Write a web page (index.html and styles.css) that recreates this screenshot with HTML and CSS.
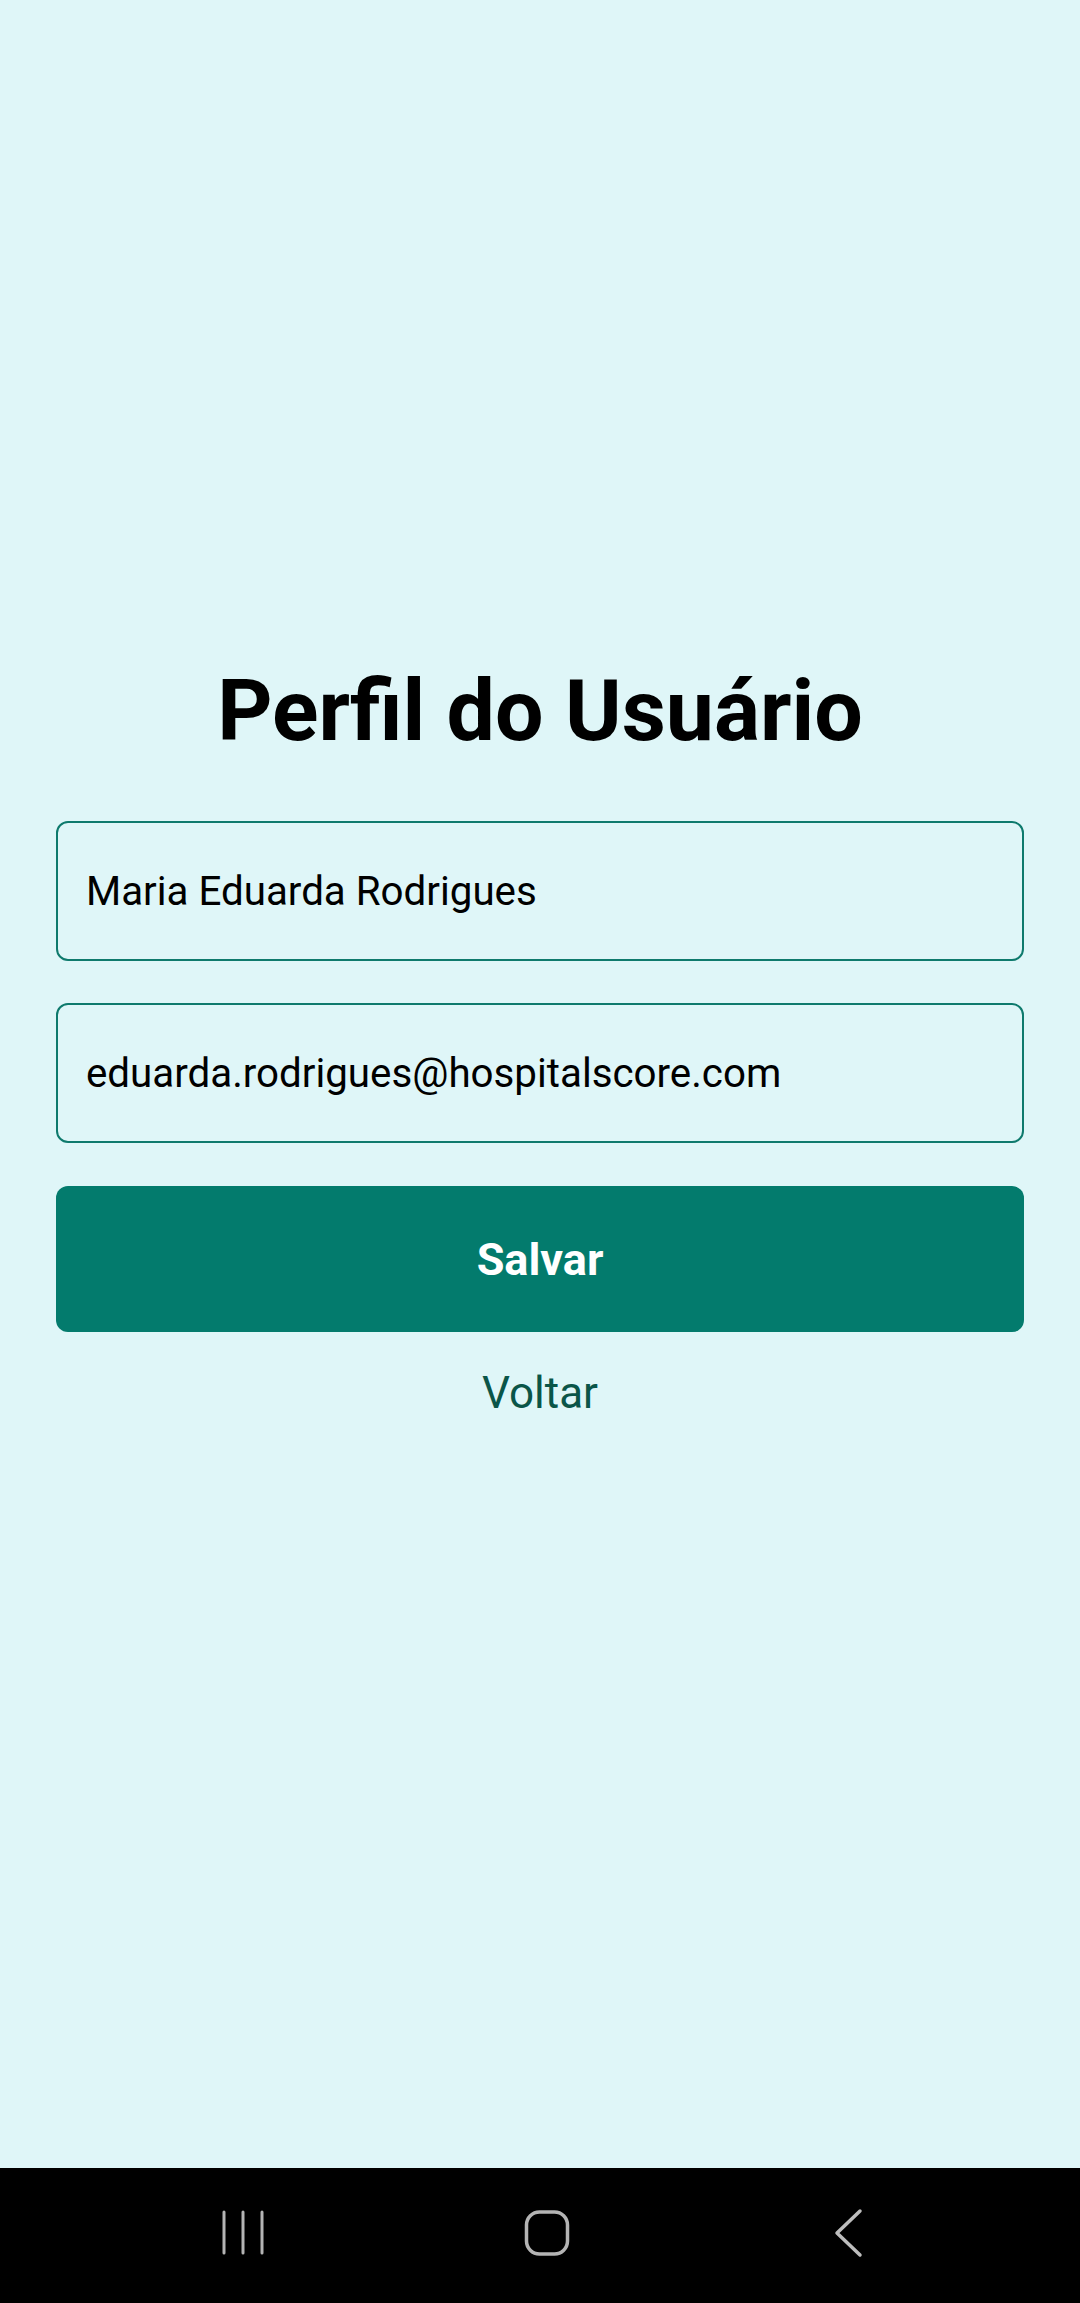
FILE: index.html
```html
<!DOCTYPE html>
<html lang="pt-BR">
<head>
<meta charset="utf-8">
<title>Perfil do Usuário</title>
<link rel="stylesheet" href="styles.css">
</head>
<body>
<div class="screen">
  <main class="content">
    <h1 class="title">Perfil do Usuário</h1>
    <div class="field">Maria Eduarda Rodrigues</div>
    <div class="field field-second">eduarda.rodrigues@hospitalscore.com</div>
    <button class="btn-save">Salvar</button>
    <a class="link-back">Voltar</a>
  </main>
  <nav class="navbar">
    <span class="nav-item">
      <svg width="60" height="60" viewBox="0 0 60 60"><path d="M11 9v41M30 9v41M49 9v41" stroke="#b4b4b4" stroke-width="3" stroke-linecap="round" fill="none"/></svg>
    </span>
    <span class="nav-item">
      <svg width="60" height="60" viewBox="0 0 60 60"><rect x="9.5" y="9" width="41" height="42" rx="13" stroke="#b4b4b4" stroke-width="3.5" fill="none"/></svg>
    </span>
    <span class="nav-item">
      <svg width="60" height="60" viewBox="0 0 60 60"><path d="M39 8L16 30L39 52" stroke="#bdbdbd" stroke-width="3.5" stroke-linecap="round" stroke-linejoin="round" fill="none"/></svg>
    </span>
  </nav>
</div>
</body>
</html>
```
FILE: styles.css
```css
* { box-sizing: border-box; }
html, body {
  margin: 0;
  padding: 0;
  background: #dff6f8;
  font-family: Roboto, "Liberation Sans", sans-serif;
}
.screen {
  width: 1080px;
  height: 2303px;
  display: flex;
  flex-direction: column;
}
.content {
  height: 2168px;
  display: flex;
  flex-direction: column;
  align-items: stretch;
  padding: 660px 56px 0;
}
.title {
  margin: 0 0 60px;
  font-size: 86px;
  line-height: 101px;
  font-weight: 700;
  color: #000;
  text-align: center;
}
.field {
  height: 140px;
  border: 2.5px solid #0e7a6d;
  border-radius: 12px;
  padding: 0 28px;
  display: flex;
  align-items: center;
  font-size: 40.3px;
  color: #000;
}
.field-second {
  margin-top: 42px;
}
.btn-save {
  margin-top: 43px;
  height: 146px;
  border: none;
  border-radius: 12px;
  background: #037b6d;
  color: #fff;
  font-family: Roboto, "Liberation Sans", sans-serif;
  font-size: 45px;
  font-weight: 700;
  padding: 0;
}
.link-back {
  margin-top: 35px;
  font-size: 44px;
  line-height: 52px;
  color: #0a5548;
  text-align: center;
}
.navbar {
  height: 135px;
  background: #000;
  display: flex;
  align-items: center;
  padding-left: 213px;
  padding-bottom: 5px;
  gap: 244px;
}
.nav-item {
  display: flex;
  width: 60px;
  height: 60px;
}
```
